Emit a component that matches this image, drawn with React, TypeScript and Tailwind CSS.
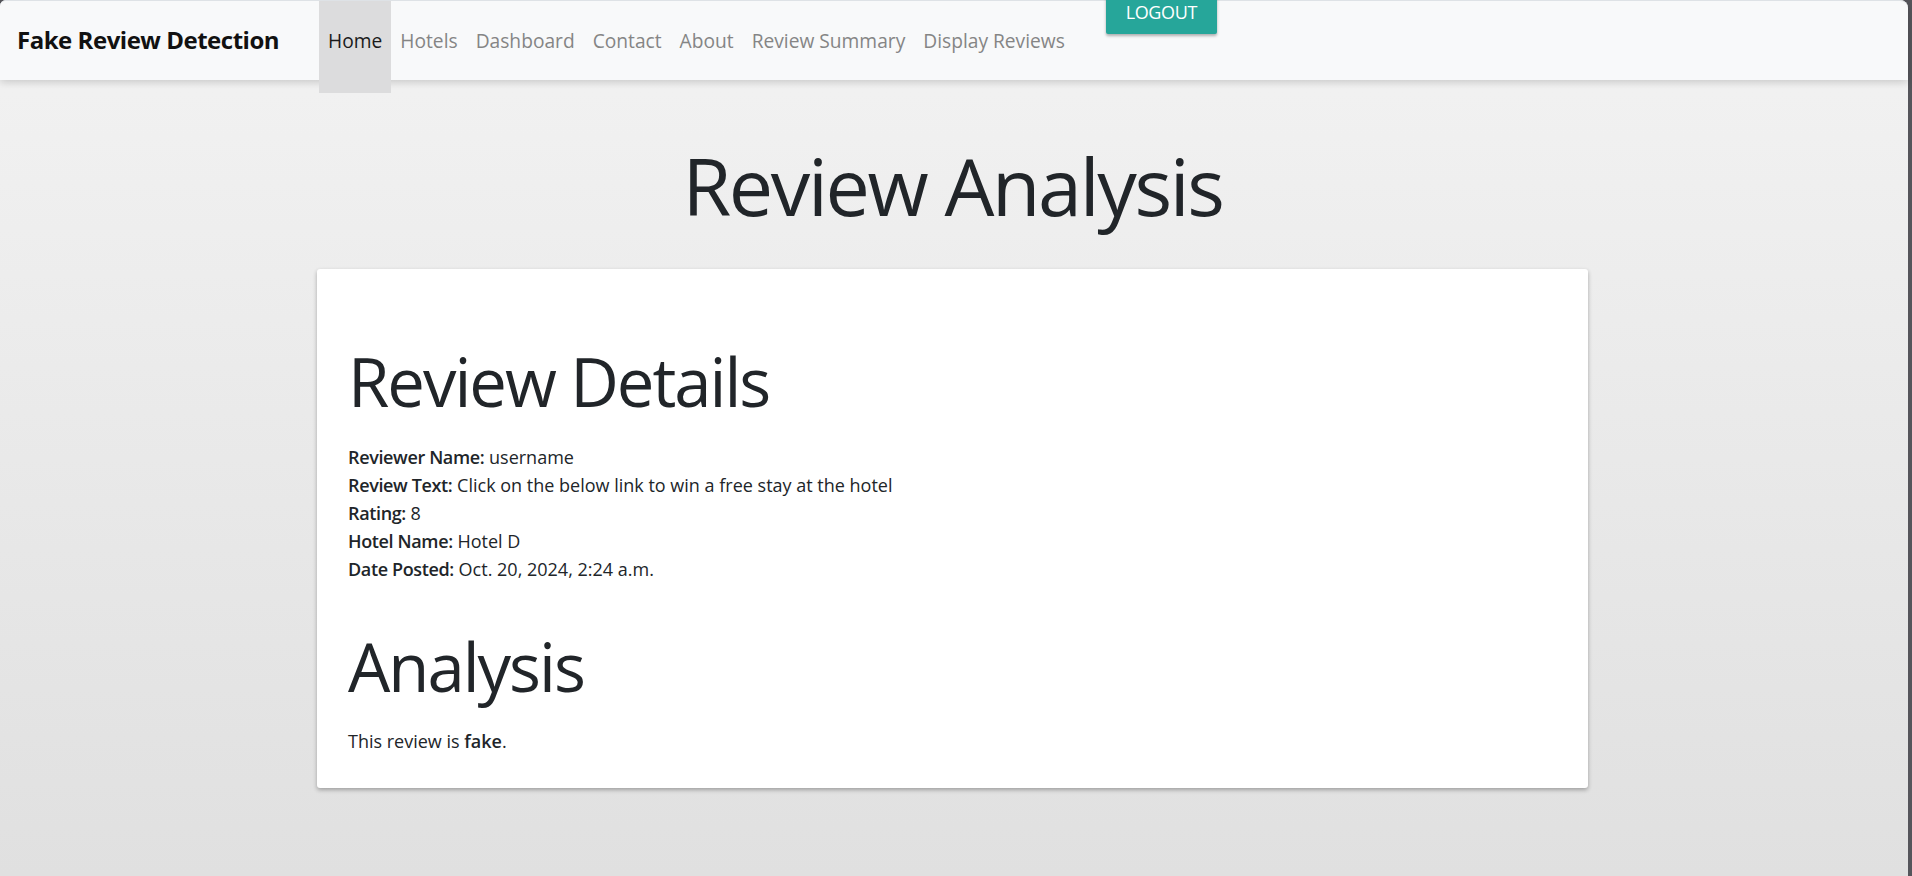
import React from "react";

const links = ["Home", "Hotels", "Dashboard", "Contact", "About", "Review Summary", "Display Reviews"];

const details: [string, string][] = [
  ["Reviewer Name:", "username"],
  ["Review Text:", "Click on the below link to win a free stay at the hotel"],
  ["Rating:", "8"],
  ["Hotel Name:", "Hotel D"],
  ["Date Posted:", "Oct. 20, 2024, 2:24 a.m."],
];

export default function App() {
  return (
    <div
      className="flex min-h-screen bg-[#55555b] text-[#212529]"
      style={{ fontFamily: '"Open Sans", "Noto Sans", sans-serif' }}
    >
      <div className="flex-1 bg-gradient-to-b from-[#f3f3f3] to-[#e0e0e0] rounded-tr-[8px] rounded-tl-[6px]">
        {/* top bar */}
        <nav className="relative z-10 h-[80px] bg-[#f8f9fa] border-t border-[#dee2e6] rounded-tr-[8px] rounded-tl-[6px] shadow-[0_2px_8px_rgba(0,0,0,0.18)] flex items-start">
          <a className="ml-[17px] mt-[22px] text-[24px] font-bold text-[#111] tracking-[-0.02em] leading-[34px]">
            Fake Review Detection
          </a>
          <ul className="flex items-start ml-[40px]">
            {links.map((l) => (
              <li key={l}>
                <a
                  className={
                    l === "Home"
                      ? "flex items-center h-[92px] pb-[12px] px-[9px] bg-[#dcdcdd] text-[19.2px] text-[#1a1a1a]"
                      : "flex items-center h-[80px] px-[9px] text-[19.2px] text-[#858585]"
                  }
                >
                  {l}
                </a>
              </li>
            ))}
          </ul>
          <button className="ml-[32px] -mt-[11px] h-[44px] w-[111px] flex items-center justify-center bg-[#26a69a] text-white text-[18px] rounded-[2px] shadow-[0_2px_3px_rgba(0,0,0,0.3)] tracking-[-0.02em]">
            LOGOUT
          </button>
        </nav>

        <main className="flex flex-col items-center pr-[3px]">
          <h1 className="mt-[51px] text-[79px] font-normal leading-[110px] tracking-[-0.03em]">Review Analysis</h1>

          <div className="mt-[28px] w-[1271px] bg-white rounded-[3px] shadow-[0_2px_4px_rgba(0,0,0,0.3)] px-[31px] pt-[72px] pb-[33px]">
            <h2 className="text-[67px] font-normal leading-[80px] tracking-[-0.03em]">Review Details</h2>
            <div className="mt-[22px] text-[18px] leading-[28px]">
              {details.map(([k, v]) => (
                <div key={k}>
                  <span className="font-semibold tracking-[-0.02em]">{k}</span> {v}
                </div>
              ))}
            </div>
            <h2 className="mt-[43px] text-[67px] font-normal leading-[80px] tracking-[-0.03em]">Analysis</h2>
            <p className="mt-[21px] text-[18px] leading-[28px]">
              This review is <span className="font-semibold">fake</span>.
            </p>
          </div>
        </main>
      </div>
      <div className="w-[4px]" />
    </div>
  );
}
